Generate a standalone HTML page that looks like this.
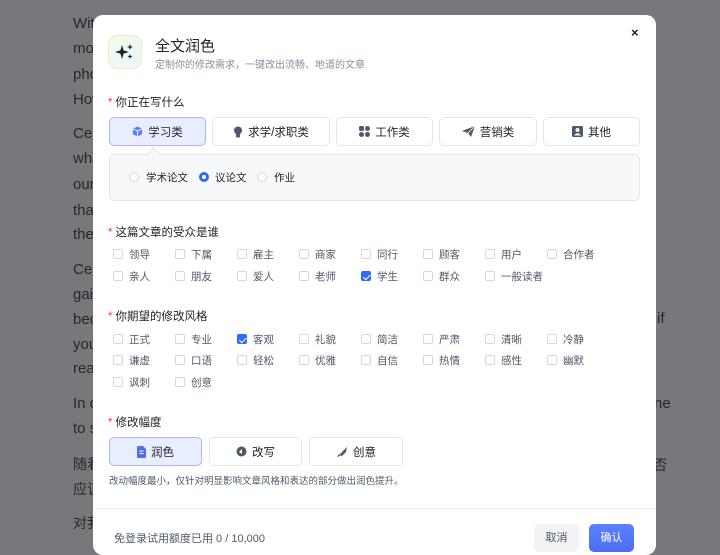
<!DOCTYPE html>
<html><head><meta charset="utf-8"><style>
*{margin:0;padding:0;box-sizing:border-box}
body{width:720px;height:536px;overflow:hidden;background:#76787c;font-family:"Liberation Sans","Noto Sans CJK SC",sans-serif;position:relative}
.bg{position:absolute;left:73px;color:#25272b;font-size:15px;line-height:18px;white-space:nowrap}
.bgr{position:absolute;color:#25272b;font-size:15px;white-space:nowrap}
.m{position:absolute;left:93px;top:15px;width:563px;height:540px;background:#fff;border-radius:10px;overflow:hidden}
.a{position:absolute;white-space:nowrap}
.lab{font-size:11.5px;color:#1d2129}
.lab b{color:#f53f3f;font-weight:normal;margin-right:3px}
.btn{position:absolute;height:29px;border:1px solid #e5e6eb;border-radius:5px;background:#fff;font-size:11.5px;color:#1d2129;display:flex;align-items:center;justify-content:center;gap:5px}
.btn.sel{background:#e8edff;border-color:#a9b8f7}
.cb{position:absolute;width:10px;height:10px;border:1px solid #d5d8de;border-radius:2px;background:#fff}
.cb.on{background:#2e6bf5;border-color:#2e6bf5}
.cb.on:after{content:"";position:absolute;left:2.5px;top:0.5px;width:3px;height:5.5px;border:solid #fff;border-width:0 1.3px 1.3px 0;transform:rotate(45deg)}
.ct{position:absolute;font-size:10.5px;color:#4e5969}
.rd{position:absolute;width:10px;height:10px;border:1px solid #d5d8de;border-radius:50%;background:#fff}
.rd.on{border:3px solid #2e6bf5}
</style></head><body>
<div class="bg" style="top:15px">Wit</div>
<div class="bg" style="top:40px">mo</div>
<div class="bg" style="top:66px">pho</div>
<div class="bg" style="top:91px">How</div>
<div class="bg" style="top:125px">Cel</div>
<div class="bg" style="top:150px">wha</div>
<div class="bg" style="top:176px">our</div>
<div class="bg" style="top:202px">tha</div>
<div class="bg" style="top:226px">the</div>
<div class="bg" style="top:261px">Cel</div>
<div class="bg" style="top:286px">gai</div>
<div class="bg" style="top:311px">bec</div>
<div class="bg" style="top:336px">you</div>
<div class="bg" style="top:360px">rea</div>
<div class="bg" style="top:395px">In c</div>
<div class="bg" style="top:420px">to s</div>
<div class="bg" style="top:455px;font-size:14px">随着</div>
<div class="bg" style="top:480px;font-size:14px">应该</div>
<div class="bg" style="top:514px;font-size:14px">对我</div>
<div class="bgr" style="left:657px;top:310px">if</div>
<div class="bgr" style="left:654px;top:395px">ne</div>
<div class="bgr" style="left:653px;top:455px;font-size:14px">否</div>

<div class="m">
 <div class="a" style="left:15px;top:20px;width:34px;height:34px;border-radius:9px;border:1px solid #e9f2b8;background:linear-gradient(135deg,#f4fbe6,#eaf6fb)"></div>
 <svg class="a" style="left:21px;top:27px" width="22" height="20" viewBox="0 0 22 20"><path d="M8 3 L9.6 8.4 L15 10 L9.6 11.6 L8 17 L6.4 11.6 L1 10 L6.4 8.4Z" fill="#1d2129"/><path d="M16 2 L16.8 4.2 L19 5 L16.8 5.8 L16 8 L15.2 5.8 L13 5 L15.2 4.2Z" fill="#1d2129"/><path d="M16 12 L16.7 13.8 L18.5 14.5 L16.7 15.2 L16 17 L15.3 15.2 L13.5 14.5 L15.3 13.8Z" fill="#1d2129"/></svg>
 <div class="a" style="left:62px;top:20px;font-size:15px;color:#1d2129">全文润色</div>
 <div class="a" style="left:62px;top:41px;font-size:10px;color:#86909c">定制你的修改需求，一键改出流畅、地道的文章</div>
 <div class="a" style="left:538px;top:10px;font-size:13px;color:#1d2129;font-weight:bold">×</div>

 <div class="a lab" style="left:15px;top:79px"><b>*</b>你正在写什么</div>
 <div class="btn sel" style="left:16px;top:102px;width:97px"><svg width="11" height="11" viewBox="0 0 12 12"><path d="M6 0.5 L11 3 L11 9 L6 11.5 L1 9 L1 3Z" fill="#5d7ef5"/><path d="M1 3 L6 5.5 L11 3 M6 5.5 L6 11.5" stroke="#fff" stroke-width="1" fill="none"/></svg>学习类</div>
 <div class="btn" style="left:119px;top:102px;width:118px"><svg width="10" height="12" viewBox="0 0 10 12"><circle cx="5" cy="4.5" r="4" fill="#4e5969"/><rect x="3" y="8" width="4" height="3.5" rx="1" fill="#4e5969"/></svg>求学/求职类</div>
 <div class="btn" style="left:243px;top:102px;width:97px"><svg width="11" height="11" viewBox="0 0 11 11"><rect x="0" y="0" width="5" height="5" rx="1.5" fill="#4e5969"/><rect x="6" y="0" width="5" height="5" rx="2.5" fill="#4e5969"/><rect x="0" y="6" width="5" height="5" rx="2.5" fill="#4e5969"/><rect x="6" y="6" width="5" height="5" rx="2.5" fill="#4e5969"/></svg>工作类</div>
 <div class="btn" style="left:346px;top:102px;width:98px"><svg width="13" height="11" viewBox="0 0 13 11"><path d="M0 5 L13 0 L9 11 L6 7Z" fill="#4e5969"/><path d="M6 7 L13 0" stroke="#fff" stroke-width="0.8"/></svg>营销类</div>
 <div class="btn" style="left:450px;top:102px;width:97px"><svg width="11" height="11" viewBox="0 0 11 11"><rect width="11" height="11" rx="1.5" fill="#4e5969"/><circle cx="5.5" cy="4" r="2" fill="#fff"/><path d="M2 9.5 Q5.5 5 9 9.5Z" fill="#fff"/></svg>其他</div>
 <div class="a" style="left:16px;top:139px;width:531px;height:47px;background:#f7f8fa;border:1px solid #e5e6eb;border-radius:5px"></div>
 <div class="a" style="left:56px;top:134px;width:9px;height:9px;background:#f7f8fa;border-left:1px solid #e5e6eb;border-top:1px solid #e5e6eb;transform:rotate(45deg)"></div>
 <div class="rd" style="left:36px;top:157px"></div><div class="ct" style="left:53px;top:155px;color:#1d2129">学术论文</div>
 <div class="rd on" style="left:106px;top:157px"></div><div class="ct" style="left:122px;top:155px;color:#1d2129">议论文</div>
 <div class="rd" style="left:164px;top:157px"></div><div class="ct" style="left:181px;top:155px;color:#1d2129">作业</div>

 <div class="a lab" style="left:15px;top:209px"><b>*</b>这篇文章的受众是谁</div>
 <div class="a lab" style="left:15px;top:293px"><b>*</b>你期望的修改风格</div>
 <div class="a lab" style="left:15px;top:399px"><b>*</b>修改幅度</div>

 <div class="btn sel" style="left:16px;top:422px;width:93px;color:#1d2129"><svg width="9" height="12" viewBox="0 0 9 12"><path d="M0 1 Q0 0 1 0 L6 0 L9 3 L9 11 Q9 12 8 12 L1 12 Q0 12 0 11Z" fill="#4f6ff0"/><path d="M2.5 5h4M2.5 7.5h4" stroke="#fff" stroke-width="1"/></svg>润色</div>
 <div class="btn" style="left:116px;top:422px;width:93px"><svg width="11" height="11" viewBox="0 0 11 11"><circle cx="5.5" cy="5.5" r="5" fill="#4e5969"/><path d="M3 6 L6 3 L6 8Z" fill="#fff"/></svg>改写</div>
 <div class="btn" style="left:216px;top:422px;width:94px"><svg width="12" height="12" viewBox="0 0 12 12"><path d="M3 9 L11 1 L10 6 L6 10Z" fill="#4e5969"/><path d="M1 11 L3 8 L4 10Z" fill="#4e5969"/></svg>创意</div>
 <div class="a" style="left:16px;top:458px;font-size:9.5px;color:#4e5969">改动幅度最小，仅针对明显影响文章风格和表达的部分做出润色提升。</div>
 <div class="a" style="left:0;top:493px;width:563px;height:1px;background:#eef0f3"></div>
 <div class="a" style="left:21px;top:515px;font-size:11px;color:#4e5969">免登录试用额度已用 0 / 10,000</div>
 <div class="a" style="left:441px;top:509px;width:45px;height:28px;background:#f2f3f5;border-radius:5px;font-size:11px;color:#4e5969;text-align:center;line-height:28px">取消</div>
 <div class="a" style="left:496px;top:509px;width:45px;height:28px;background:linear-gradient(#5b82ff,#4d6cf2);border-radius:5px;font-size:11px;color:#fff;text-align:center;line-height:28px">确认</div>
</div>
<script>
var m=document.querySelector('.m'),cols=[20,82,144,206,268,330,392,454];
function row(items,y,on){items.forEach(function(t,i){var c=document.createElement('div');c.className='cb'+(on===i?' on':'');c.style.left=cols[i]+'px';c.style.top=(y-5)+'px';m.appendChild(c);var s=document.createElement('div');s.className='ct';s.textContent=t;s.style.left=(cols[i]+16)+'px';s.style.top=(y-7)+'px';m.appendChild(s);});}
row(['领导','下属','雇主','商家','同行','顾客','用户','合作者'],239);
row(['亲人','朋友','爱人','老师','学生','群众','一般读者'],261,4);
row(['正式','专业','客观','礼貌','简洁','严肃','清晰','冷静'],324,2);
row(['谦虚','口语','轻松','优雅','自信','热情','感性','幽默'],345);
row(['讽刺','创意'],367);
</script>
</body></html>
